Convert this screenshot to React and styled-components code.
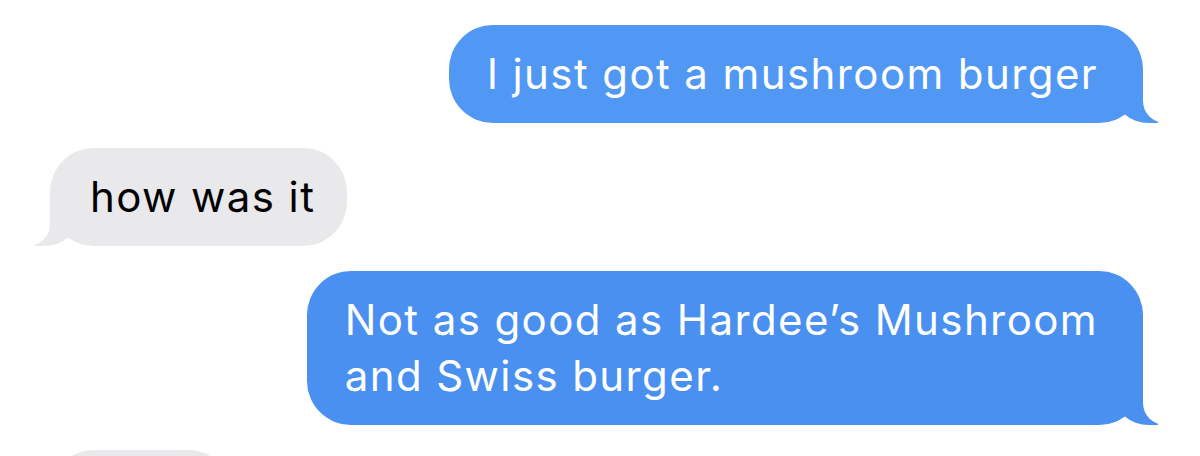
import React from 'react';
import styled, { createGlobalStyle } from 'styled-components';

const Global = createGlobalStyle`
  html, body {
    margin: 0;
    padding: 0;
    background: #fff;
    height: 456px;
    overflow: hidden;
  }
`;

const Thread = styled.div`
  display: flex;
  flex-direction: column;
  gap: 25px;
  padding: 25px 57px 0 50px;
  font-family: Inter, 'Liberation Sans', Arial, sans-serif;
  font-size: 42px;
  line-height: 56px;
`;

const Bubble = styled.div`
  position: relative;
  max-width: 860px;
  padding: 21px ${p => (p.$me ? '45px' : '32px')} 21px ${p => (p.$me ? '38px' : '40px')};
  border-radius: 44px;
  background: ${p => (p.$me ? p.$tint || '#4c92f1' : '#e9e9eb')};
  color: ${p => (p.$me ? '#fff' : '#000')};
  align-self: ${p => (p.$me ? 'flex-end' : 'flex-start')};
  white-space: pre-line;
  letter-spacing: 1.4px;

  /* the little curled tail at the bottom corner */
  &::before {
    content: '';
    position: absolute;
    bottom: 0;
    ${p => (p.$me ? 'right: -15px;' : 'left: -15px;')}
    width: 44px;
    height: 44px;
    background: inherit;
    ${p =>
      p.$me
        ? 'border-bottom-left-radius: 35px 31px;'
        : 'border-bottom-right-radius: 35px 31px;'}
  }

  &::after {
    content: '';
    position: absolute;
    bottom: 0;
    ${p => (p.$me ? 'right: -57px;' : 'left: -57px;')}
    width: 57px;
    height: 44px;
    background: #fff;
    ${p =>
      p.$me
        ? 'border-bottom-left-radius: 22px;'
        : 'border-bottom-right-radius: 22px;'}
  }
`;

const messages = [
  { me: true, tint: '#5098f3', text: 'I just got a mushroom burger' },
  { me: false, text: 'how was it' },
  { me: true, tint: '#4a90f0', text: 'Not as good as Hardee\u2019s Mushroom\nand Swiss burger.' },
  { me: false, text: 'Dang' },
];

export default function App() {
  return (
    <>
      <Global />
      <Thread>
        {messages.map((m, i) => (
          <Bubble key={i} $me={m.me} $tint={m.tint}>
            {m.text}
          </Bubble>
        ))}
      </Thread>
    </>
  );
}
